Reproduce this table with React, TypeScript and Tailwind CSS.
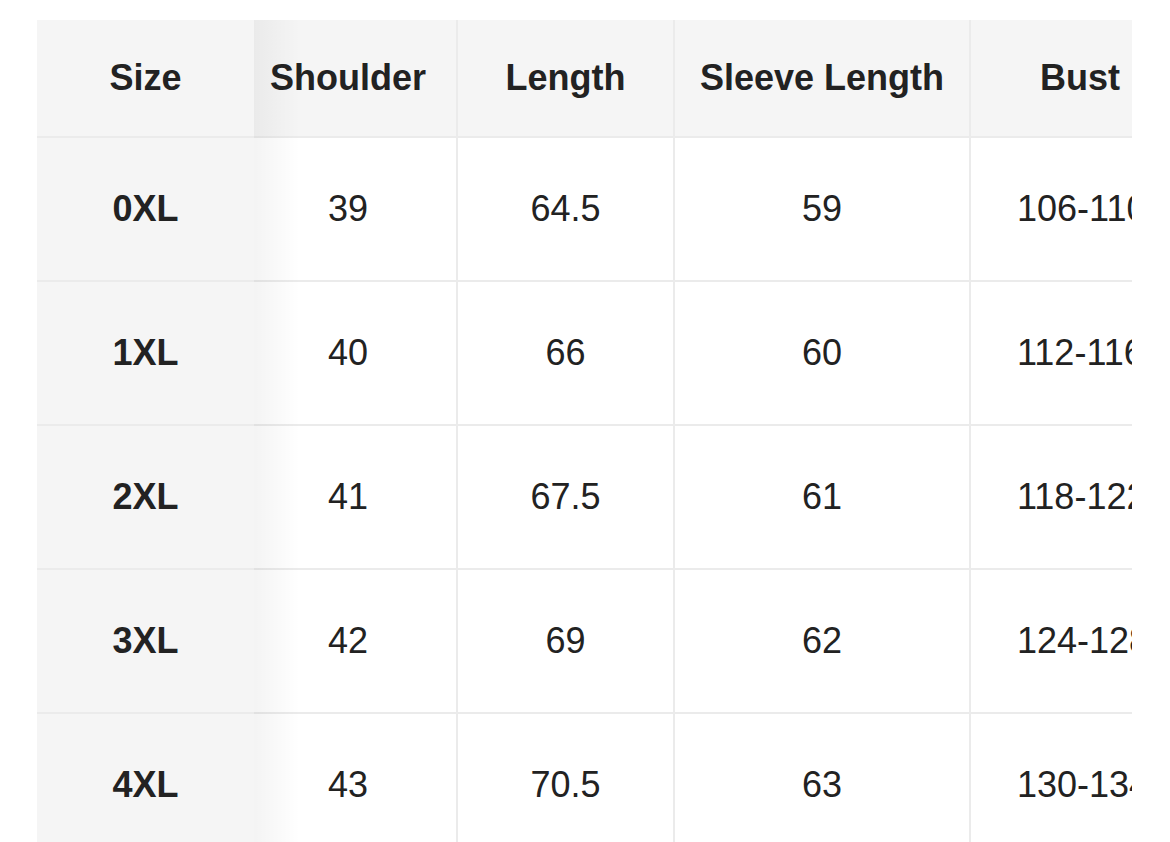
import React from "react";

const rows = [
  ["0XL", "39", "64.5", "59", "106-110"],
  ["1XL", "40", "66", "60", "112-116"],
  ["2XL", "41", "67.5", "61", "118-122"],
  ["3XL", "42", "69", "62", "124-128"],
  ["4XL", "43", "70.5", "63", "130-134"],
];

export default function App() {
  return (
    <div
      className="w-[1170px] h-[842px] overflow-hidden bg-white text-[#222222]"
      style={{ fontFamily: '"Liberation Sans", Arial, Helvetica, sans-serif' }}
    >
      <div className="relative ml-[37px] mt-[20px] w-[1095px] overflow-hidden">
        {/* header */}
        <div className="flex h-[118px] border-b-2 border-[#ebebeb] bg-[#f5f5f5] text-[36px] font-bold">
          <div className="flex w-[217px] shrink-0 items-center justify-center">Size</div>
          <div className="flex w-[204px] shrink-0 items-center justify-center border-r-2 border-[#ebebeb] pr-[14px]">Shoulder</div>
          <div className="flex w-[217px] shrink-0 items-center justify-center border-r-2 border-[#ebebeb]">Length</div>
          <div className="flex w-[296px] shrink-0 items-center justify-center border-r-2 border-[#ebebeb]">Sleeve Length</div>
          <div className="flex w-[216px] shrink-0 items-center pl-[69px] whitespace-nowrap">Bust</div>
        </div>
        {rows.map((r) => (
          <div key={r[0]} className="flex h-[144px] border-b-2 border-[#ebebeb] text-[36px]">
            <div className="flex w-[217px] shrink-0 items-center justify-center bg-[#f5f5f5] font-bold">{r[0]}</div>
            <div className="flex w-[204px] shrink-0 items-center justify-center border-r-2 border-[#ebebeb] pr-[14px]">{r[1]}</div>
            <div className="flex w-[217px] shrink-0 items-center justify-center border-r-2 border-[#ebebeb]">{r[2]}</div>
            <div className="flex w-[296px] shrink-0 items-center justify-center border-r-2 border-[#ebebeb]">{r[3]}</div>
            <div className="flex w-[216px] shrink-0 items-center pl-[46px] whitespace-nowrap">{r[4]}</div>
          </div>
        ))}
        {/* sticky column shadow */}
        <div className="pointer-events-none absolute left-[217px] top-0 bottom-0 w-[46px] bg-gradient-to-r from-black/[0.045] to-transparent" />
      </div>
    </div>
  );
}
